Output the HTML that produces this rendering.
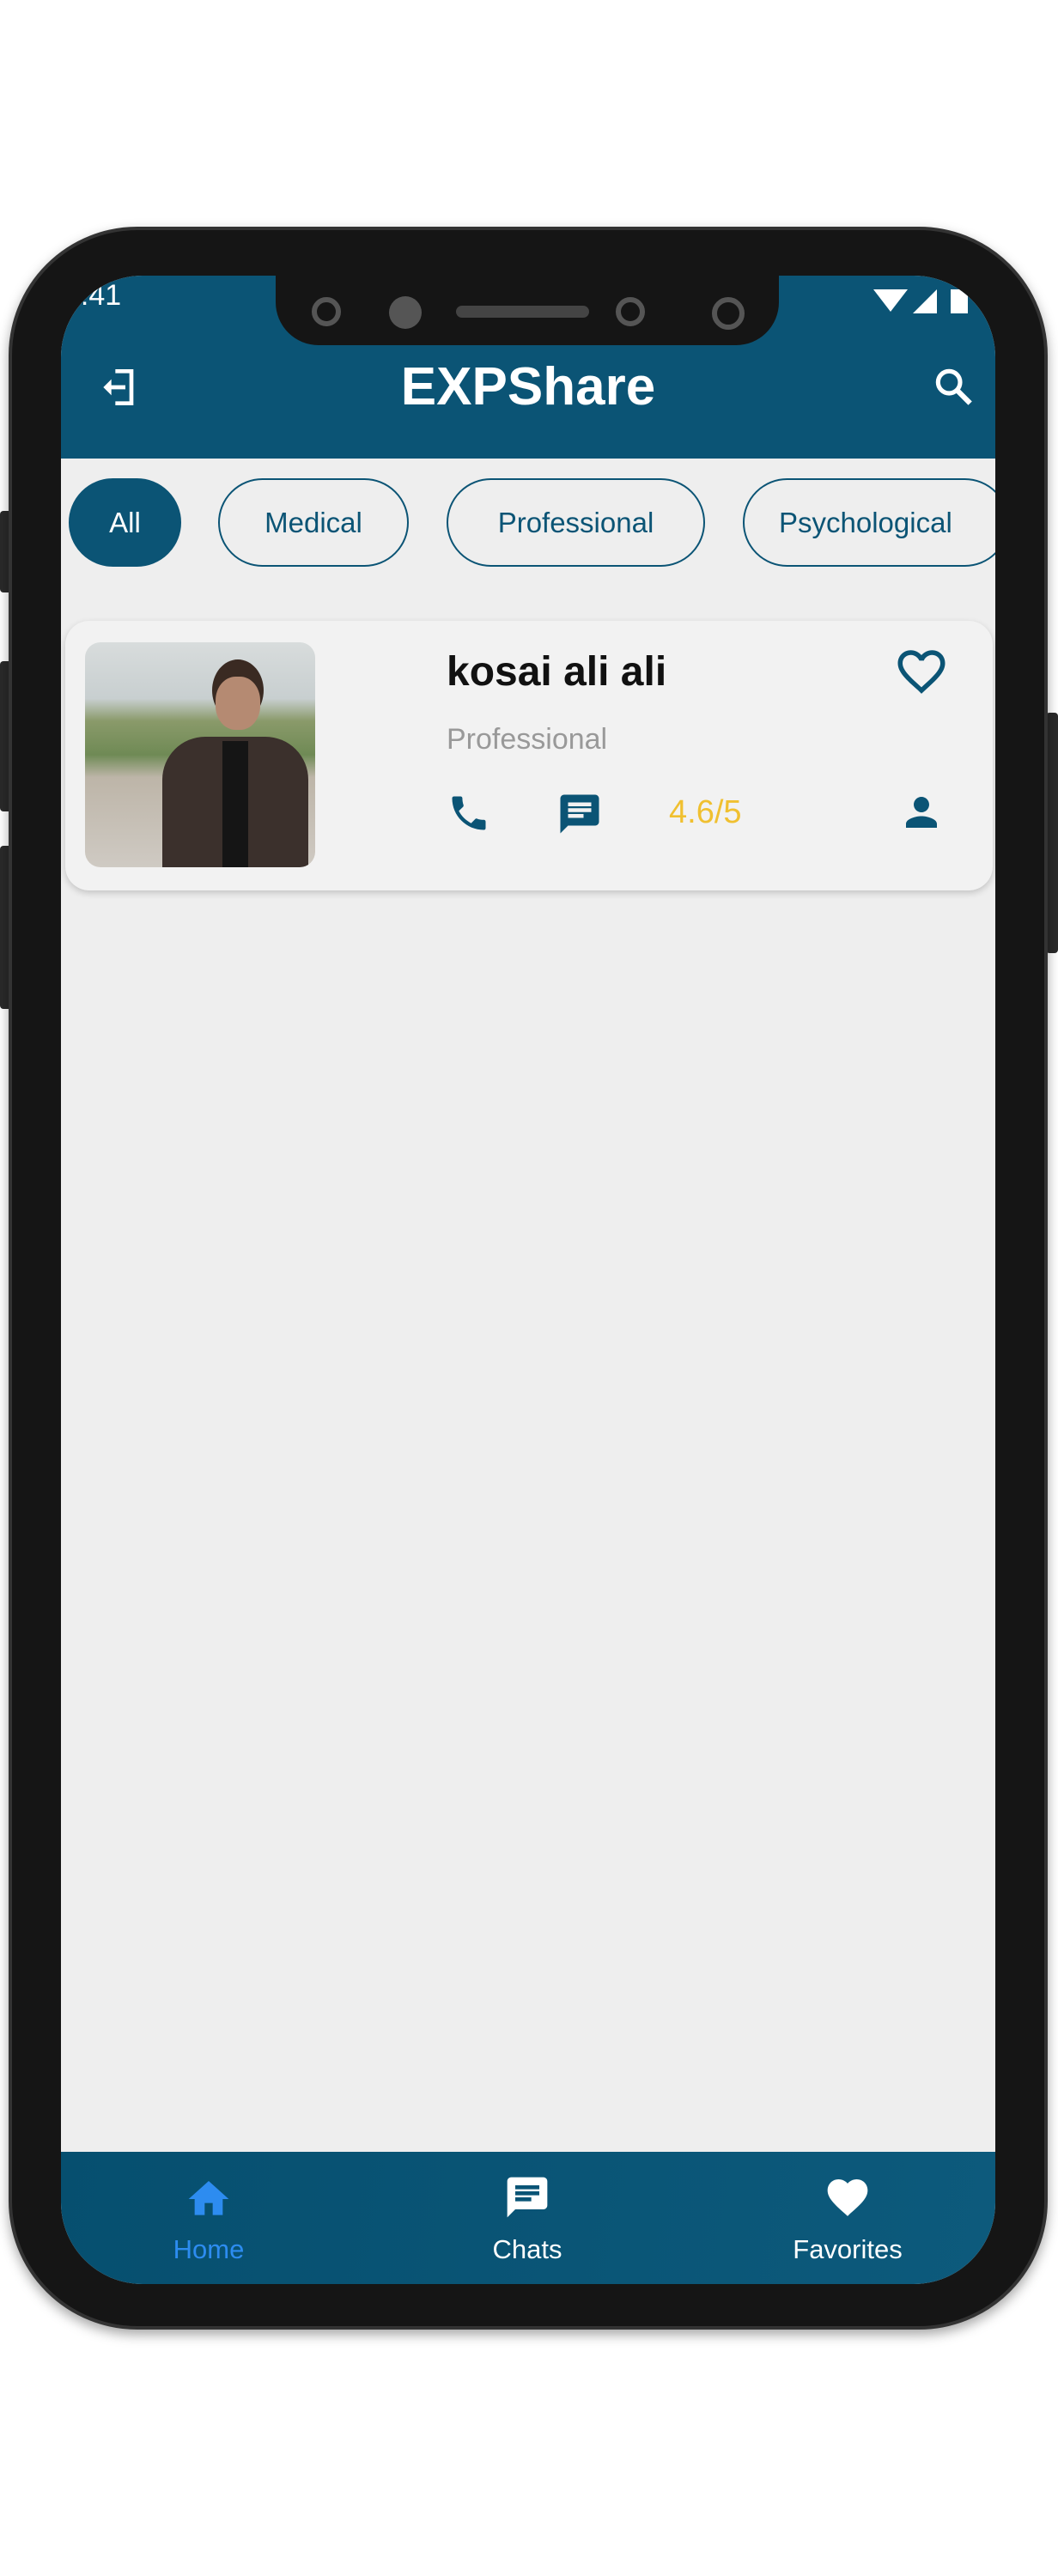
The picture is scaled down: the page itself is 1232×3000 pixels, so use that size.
<!DOCTYPE html>
<html><head><meta charset="utf-8"><style>
*{margin:0;padding:0;box-sizing:border-box}
body{width:1232px;height:3000px;background:#fff;position:relative;overflow:hidden;font-family:"Liberation Sans",sans-serif}
.a{position:absolute}
.btn{position:absolute;background:#2a2a2a;border-radius:4px}
.phone{left:10px;top:264px;width:1210px;height:2449px;background:#151515;border-radius:150px;box-shadow:0 6px 14px rgba(0,0,0,.35);border:4px solid #333}
.screen{left:71px;top:321px;width:1088px;height:2339px;background:#eeeeee;border-radius:95px;overflow:hidden}
.bar{left:0;top:0;width:1088px;height:213px;background:#0b5475}
.notch{left:250px;top:0;width:586px;height:81px;background:#151515;border-radius:0 0 50px 50px}
.chip{position:absolute;top:236px;height:103px;border:2px solid #0b5475;border-radius:52px;color:#0b5475;font-size:33px;display:flex;align-items:center;justify-content:center}
.card{left:5px;top:402px;width:1080px;height:314px;background:#f2f2f2;border-radius:28px;box-shadow:0 3px 8px rgba(0,0,0,.18)}
.nav{left:0;top:2185px;width:1088px;height:154px;background:linear-gradient(100deg,#064f6f,#0d5a7c)}
.lbl{position:absolute;top:2281px;font-size:31px;color:#fff;transform:translateX(-50%)}
</style></head><body>
<div class="btn" style="left:0;top:595px;width:14px;height:95px"></div>
<div class="btn" style="left:0;top:770px;width:14px;height:175px"></div>
<div class="btn" style="left:0;top:985px;width:14px;height:190px"></div>
<div class="btn" style="left:1218px;top:830px;width:14px;height:280px"></div>
<div class="a phone"></div>
<div class="a screen">
  <div class="a bar"></div>
  <div class="a notch">
    <div class="a" style="left:42px;top:25px;width:34px;height:34px;border:6px solid #555;border-radius:50%"></div>
    <div class="a" style="left:132px;top:24px;width:38px;height:38px;background:#555;border-radius:50%"></div>
    <div class="a" style="left:210px;top:35px;width:155px;height:14px;background:#444;border-radius:7px"></div>
    <div class="a" style="left:396px;top:25px;width:34px;height:34px;border:6px solid #555;border-radius:50%"></div>
    <div class="a" style="left:508px;top:25px;width:38px;height:38px;border:6px solid #555;border-radius:50%"></div>
  </div>
  <div class="a" style="left:4px;top:4px;color:#fff;font-size:34px">1:41</div>
  <svg class="a" style="left:940px;top:10px" width="130" height="40" viewBox="0 0 130 40"><path d="M6 6h40L26 32z" fill="#fff"/><path d="M52 34L80 6v28z" fill="#fff"/><rect x="96" y="6" width="20" height="28" fill="#fff"/></svg>
  <svg class="a" style="left:40px;top:102px" width="56" height="56" viewBox="0 0 24 24"><path d="M10 5V3h9v18h-9v-2h7V5z M4 12l4-4v3h7v2H8v3z" fill="#fff"/></svg>
  <div class="a" style="left:0;width:1088px;top:94px;text-align:center;color:#fff;font-size:62px;font-weight:bold">EXPShare</div>
  <svg class="a" style="left:1012px;top:102px" width="56" height="56" viewBox="0 0 24 24"><circle cx="9.5" cy="9.5" r="5.5" stroke="#fff" stroke-width="2.2" fill="none"/><path d="M13.5 13.5L20 20" stroke="#fff" stroke-width="2.6"/></svg>
  <div class="chip" style="left:9px;width:131px;background:#0b5475;color:#fff">All</div>
  <div class="chip" style="left:183px;width:222px">Medical</div>
  <div class="chip" style="left:449px;width:301px">Professional</div>
  <div class="chip" style="left:794px;width:310px;justify-content:flex-start;padding-left:40px">Psychological</div>
  <div class="a card">
    <div class="a" style="left:23px;top:25px;width:268px;height:262px;border-radius:18px;overflow:hidden;background:linear-gradient(#d8dcdc 0%,#c8cfd0 25%,#8a9a6a 35%,#6f8a55 50%,#bdb5a8 60%,#cfcac3 100%)">
      <div class="a" style="left:148px;top:20px;width:60px;height:72px;background:#3a2a22;border-radius:50%"></div>
      <div class="a" style="left:152px;top:40px;width:52px;height:62px;background:#b58a72;border-radius:45%"></div>
      <div class="a" style="left:90px;top:110px;width:170px;height:160px;background:#3b302c;border-radius:50px 50px 0 0"></div>
      <div class="a" style="left:160px;top:115px;width:30px;height:150px;background:#151515"></div>
    </div>
    <div class="a" style="left:444px;top:32px;font-size:48px;font-weight:bold;color:#111">kosai ali ali</div>
    <div class="a" style="left:444px;top:119px;font-size:34px;color:#999">Professional</div>
    <svg class="a" style="left:444px;top:198px" width="52" height="52" viewBox="0 0 24 24"><path d="M6.6 10.8c1.4 2.8 3.8 5.1 6.6 6.6l2.2-2.2c.3-.3.7-.4 1-.2 1.1.4 2.3.6 3.6.6.6 0 1 .4 1 1V20c0 .6-.4 1-1 1C10.6 21 3 13.4 3 4c0-.6.4-1 1-1h3.5c.6 0 1 .4 1 1 0 1.3.2 2.5.6 3.6.1.3 0 .7-.2 1z" fill="#0b5475"/></svg>
    <svg class="a" style="left:572px;top:198px" width="54" height="54" viewBox="0 0 24 24"><path d="M20 2H4c-1.1 0-2 .9-2 2v18l4-4h14c1.1 0 2-.9 2-2V4c0-1.1-.9-2-2-2zM6 9h12v2H6zm8 5H6v-2h8zm4-6H6V6h12z" fill="#0b5475"/></svg>
    <div class="a" style="left:703px;top:202px;font-size:38px;color:#f0c030">4.6/5</div>
    <svg class="a" style="left:970px;top:196px" width="54" height="54" viewBox="0 0 24 24"><path d="M12 12c2.2 0 4-1.8 4-4s-1.8-4-4-4-4 1.8-4 4 1.8 4 4 4zm0 2c-2.7 0-8 1.3-8 4v2h16v-2c0-2.7-5.3-4-8-4z" fill="#0b5475"/></svg>
    <svg class="a" style="left:964px;top:26px" width="66" height="66" viewBox="0 0 24 24"><path d="M16.5 3c-1.7 0-3.4.8-4.5 2.1C10.9 3.8 9.2 3 7.5 3 4.4 3 2 5.4 2 8.5c0 3.8 3.4 6.9 8.6 11.5L12 21.4l1.4-1.3C18.6 15.4 22 12.3 22 8.5 22 5.4 19.6 3 16.5 3zm-4.4 15.6l-.1.1-.1-.1C7.1 14.2 4 11.4 4 8.5 4 6.5 5.5 5 7.5 5c1.5 0 3 1 3.6 2.4h1.9C13.5 6 15 5 16.5 5c2 0 3.5 1.5 3.5 3.5 0 2.9-3.1 5.7-7.9 10.1z" fill="#0b5475"/></svg>
  </div>
  <div class="a nav"></div>
  <svg class="a" style="left:144px;top:2212px" width="56" height="56" viewBox="0 0 24 24"><path d="M10 20v-6h4v6h5v-8h3L12 3 2 12h3v8z" fill="#2d8cf0"/></svg>
  <svg class="a" style="left:515px;top:2210px" width="56" height="56" viewBox="0 0 24 24"><path d="M20 2H4c-1.1 0-2 .9-2 2v18l4-4h14c1.1 0 2-.9 2-2V4c0-1.1-.9-2-2-2zM6 9h12v2H6zm8 5H6v-2h8zm4-6H6V6h12z" fill="#fff"/></svg>
  <svg class="a" style="left:888px;top:2210px" width="56" height="56" viewBox="0 0 24 24"><path d="M12 21.4l-1.4-1.3C5.4 15.4 2 12.3 2 8.5 2 5.4 4.4 3 7.5 3c1.7 0 3.4.8 4.5 2.1C13.1 3.8 14.8 3 16.5 3 19.6 3 22 5.4 22 8.5c0 3.800-3.4 6.9-8.6 11.5z" fill="#fff"/></svg>
  <div class="lbl" style="left:172px;color:#2d8cf0">Home</div>
  <div class="lbl" style="left:543px">Chats</div>
  <div class="lbl" style="left:916px">Favorites</div>
</div>
</body></html>
